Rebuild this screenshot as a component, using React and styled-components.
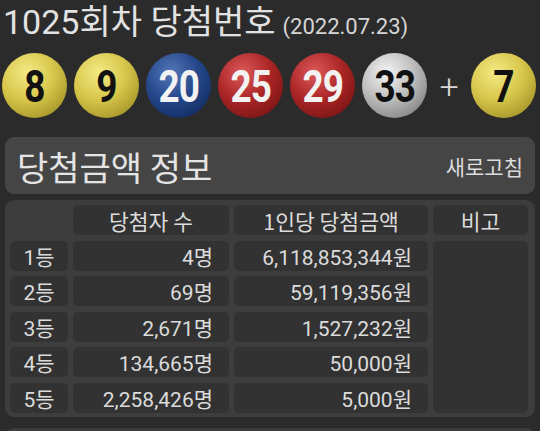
import React from "react";
import styled, { createGlobalStyle } from "styled-components";

const GlobalStyle = createGlobalStyle`
  html, body {
    margin: 0;
    padding: 0;
    background: #2b2b2b;
  }
  body {
    font-family: Roboto, "Noto Sans CJK KR", sans-serif;
    color: #dedede;
    overflow: hidden;
  }
`;

const Page = styled.div`
  width: 540px;
  height: 431px;
  overflow: hidden;
`;

const TitleRow = styled.div`
  display: flex;
  align-items: baseline;
  gap: 7px;
  padding: 2px 0 0 3px;
  height: 46px;
  box-sizing: border-box;
`;

const Title = styled.span`
  font-size: 34px;
  line-height: 40px;
  color: #e2e2e2;
`;

const DateText = styled.span`
  font-size: 22px;
  color: #d6d6d6;
`;

const BallRow = styled.div`
  display: flex;
  align-items: center;
  gap: 7px;
  padding-left: 2px;
  margin-top: 7px;
`;

const palettes = {
  yellow: ["#f4ea86", "#d7c64a", "#8f7f18", "#111"],
  blue: ["#5577b8", "#24478a", "#0b2150", "#f2f2f2"],
  red: ["#dd5a5a", "#ac2626", "#650c0c", "#f2f2f2"],
  gray: ["#f4f4f4", "#bdbdbd", "#6c6c6c", "#111"],
};

const Ball = styled.div`
  width: 65px;
  height: 65px;
  border-radius: 50%;
  flex: none;
  display: flex;
  align-items: center;
  justify-content: center;
  background: radial-gradient(
    circle at 38% 30%,
    ${(p) => palettes[p.$tone][0]} 0%,
    ${(p) => palettes[p.$tone][1]} 45%,
    ${(p) => palettes[p.$tone][2]} 100%
  );
  color: ${(p) => palettes[p.$tone][3]};
`;

const BallNum = styled.span`
  display: inline-block;
  font-weight: 700;
  font-size: 45px;
  line-height: 1;
  letter-spacing: -1px;
  transform: scaleX(0.82);
  margin-top: 2px;
`;

const Plus = styled.div`
  width: 30px;
  text-align: center;
  font-size: 34px;
  color: #d8d8d8;
  font-weight: 300;
`;

const InfoBar = styled.div`
  margin: 19px 5px 0 5px;
  height: 57px;
  background: #454545;
  border-radius: 9px;
  display: flex;
  align-items: center;
  justify-content: space-between;
  padding: 0 12px 0 12px;
`;

const InfoTitle = styled.span`
  font-size: 34px;
  color: #e4e4e4;
  font-family: "Noto Sans CJK KR", sans-serif;
  margin-top: 2px;
`;

const Refresh = styled.span`
  font-size: 21px;
  color: #dcdcdc;
  font-family: "Noto Sans CJK KR", sans-serif;
`;

const Table = styled.div`
  margin: 6px 5px 0 5px;
  background: #3d3d3d;
  border-radius: 9px;
  padding: 5px 6px 4px 5px;
  display: grid;
  grid-template-columns: 58px 156px 194px 95px;
  grid-auto-rows: 30px;
  column-gap: 5px;
  row-gap: 5.6px;
`;

const Cell = styled.div`
  background: ${(p) => (p.$blank ? "transparent" : "#323232")};
  border-radius: 5px;
  display: flex;
  align-items: center;
  justify-content: ${(p) => (p.$right ? "flex-end" : "center")};
  padding-right: ${(p) => (p.$right ? "16px" : "0")};
  font-size: ${(p) => (p.$head ? "21.5px" : "21px")};
  color: #dcdcdc;
  font-family: ${(p) =>
    p.$head ? '"Noto Sans CJK KR", sans-serif' : 'Roboto, "Noto Sans CJK KR", sans-serif'};
  white-space: nowrap;
`;

const NoteCell = styled(Cell)`
  grid-column: 4;
  grid-row: 2 / span 5;
`;

const BottomPanel = styled.div`
  margin: 11px 5px 0 5px;
  height: 40px;
  background: #3d3d3d;
  border-radius: 9px;
`;

const balls = [
  { n: 8, tone: "yellow" },
  { n: 9, tone: "yellow" },
  { n: 20, tone: "blue" },
  { n: 25, tone: "red" },
  { n: 29, tone: "red" },
  { n: 33, tone: "gray" },
];

const rows = [
  ["1등", "4명", "6,118,853,344원"],
  ["2등", "69명", "59,119,356원"],
  ["3등", "2,671명", "1,527,232원"],
  ["4등", "134,665명", "50,000원"],
  ["5등", "2,258,426명", "5,000원"],
];

const App = () => {
  return (
    <Page>
      <GlobalStyle />
      <TitleRow>
        <Title>1025회차 당첨번호</Title>
        <DateText>(2022.07.23)</DateText>
      </TitleRow>
      <BallRow>
        {balls.map((b) => (
          <Ball key={b.n} $tone={b.tone}>
            <BallNum>{b.n}</BallNum>
          </Ball>
        ))}
        <Plus>+</Plus>
        <Ball $tone="yellow">
          <BallNum>7</BallNum>
        </Ball>
      </BallRow>
      <InfoBar>
        <InfoTitle>당첨금액 정보</InfoTitle>
        <Refresh>새로고침</Refresh>
      </InfoBar>
      <Table>
        <Cell $blank />
        <Cell $head>당첨자 수</Cell>
        <Cell $head>1인당 당첨금액</Cell>
        <Cell $head>비고</Cell>
        <NoteCell />
        {rows.map((r) => (
          <React.Fragment key={r[0]}>
            <Cell>{r[0]}</Cell>
            <Cell $right>{r[1]}</Cell>
            <Cell $right>{r[2]}</Cell>
          </React.Fragment>
        ))}
      </Table>
      <BottomPanel />
    </Page>
  );
};

export default App;
